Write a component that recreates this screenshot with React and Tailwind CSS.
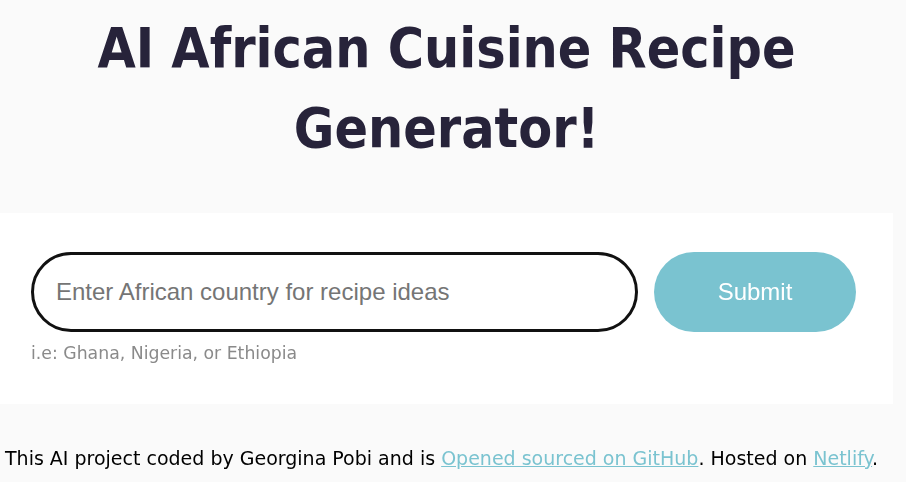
export default function App() {
  return (
    <div className="min-h-[482px] bg-[#fafafa] text-black" style={{ fontFamily: '"DejaVu Sans", sans-serif' }}>
      <div className="w-[893px]">
        <h1 className="pt-[8px] text-center text-[55px] font-bold leading-[80px] text-[#27233a]" style={{ fontFamily: '"DejaVu Sans Condensed", "DejaVu Sans", sans-serif' }}>
          AI African Cuisine Recipe
          <br />
          Generator!
        </h1>
        <div className="mt-[45px] bg-white px-[31px] pt-[39px] pb-[41px]">
          <form className="flex gap-[16px]" onSubmit={(e) => e.preventDefault()}>
            <input
              type="text"
              autoFocus
              placeholder="Enter African country for recipe ideas"
              className="h-[80px] w-[607px] rounded-full border-[3px] border-[#111] px-[22px] text-[24px] text-black outline-none placeholder:text-[#757575]"
              style={{ fontFamily: '"Liberation Sans", Arial, sans-serif' }}
            />
            <button
              type="submit"
              className="h-[80px] w-[202px] rounded-full bg-[#7ac3d0] text-[24px] text-white"
              style={{ fontFamily: '"Liberation Sans", Arial, sans-serif' }}
            >
              Submit
            </button>
          </form>
          <div className="mt-[11px] text-[17.3px] leading-[20px] text-[#8a8a8a]">
            i.e: Ghana, Nigeria, or Ethiopia
          </div>
        </div>
      </div>
      <footer className="mt-[42px] px-[5px] text-[19px] leading-[24px]">
        This AI project coded by Georgina Pobi and is{" "}
        <a href="#" className="text-[#7ac3d0] underline">Opened sourced on GitHub</a>. Hosted on{" "}
        <a href="#" className="text-[#7ac3d0] underline">Netlify</a>.
      </footer>
    </div>
  );
}
